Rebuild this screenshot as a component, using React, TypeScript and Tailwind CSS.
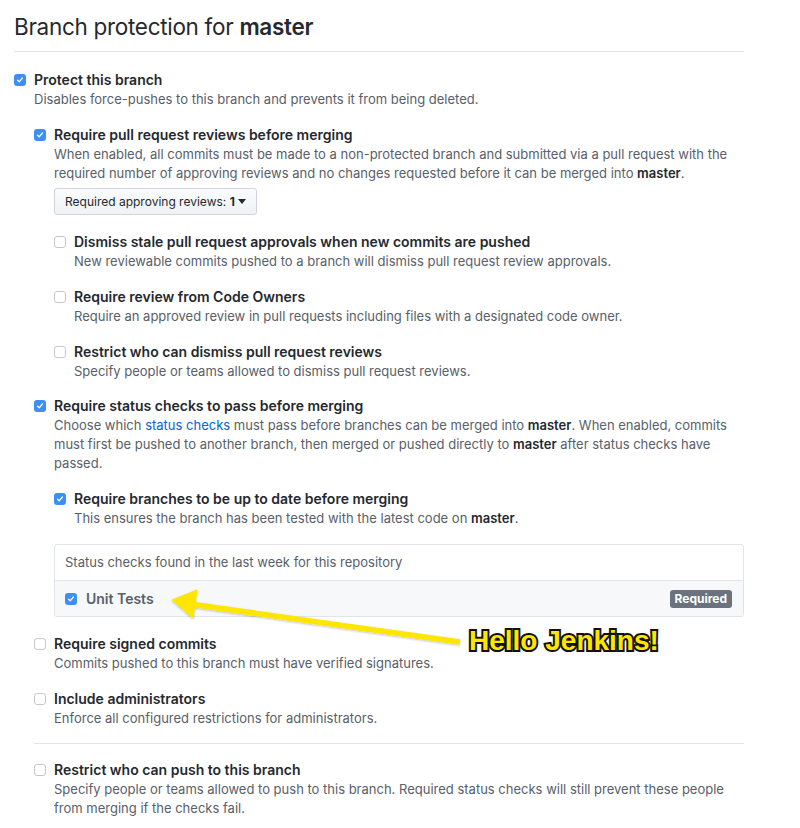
import type { ReactNode } from 'react';

const font = { fontFamily: 'Inter, "Liberation Sans", Arial, sans-serif' };

function Checkbox({ checked }: { checked?: boolean }) {
  if (checked) {
    return (
      <span className="mt-[4px] flex h-[12px] w-[12px] shrink-0 items-center justify-center rounded-[3px] bg-[#3d8ff5]">
        <svg width="8" height="8" viewBox="0 0 8 8" fill="none">
          <path d="M1.6 4.2 3.2 5.8 6.4 2" stroke="white" strokeWidth="1.3" strokeLinecap="round" strokeLinejoin="round" />
        </svg>
      </span>
    );
  }
  return <span className="mt-[4px] h-[12px] w-[12px] shrink-0 rounded-[3px] border border-[#c7c7c7] bg-white" />;
}

function Option({
  checked,
  label,
  children,
  extra,
  className = '',
}: {
  checked?: boolean;
  label: string;
  children?: ReactNode;
  extra?: ReactNode;
  className?: string;
}) {
  return (
    <div className={`flex gap-[8px] ${className}`}>
      <Checkbox checked={checked} />
      <div className="min-w-0 flex-1">
        <div className="text-[14px] font-semibold leading-[20px] text-[#24292e]">{label}</div>
        <div className="text-[13px] leading-[19px] text-[#586069]">{children}</div>
        {extra}
      </div>
    </div>
  );
}

const Master = () => <b className="font-semibold text-[#24292e]">master</b>;

export default function App() {
  return (
    <div className="relative min-h-[828px] bg-white" style={font}>
      <div className="ml-[14px] w-[730px] pt-[12px]">
        <h2 className="border-b border-[#e1e4e8] pb-[9px] text-[22.5px] leading-[30px] tracking-[-0.3px] text-[#24292e]">
          Branch protection for <span className="font-semibold">master</span>
        </h2>

        <Option
          checked
          label="Protect this branch"
          className="mt-[18px]"
          extra={
            <div>
              <Option
                checked
                label="Require pull request reviews before merging"
                className="mt-[16px]"
                extra={
                  <>
                    <button className="mt-[5px] flex h-[27px] items-center rounded-[3px] border border-[#d1d5da] bg-gradient-to-b from-[#fafbfc] to-[#eff3f6] px-[10px] text-[12px] text-[#24292e]">
                      Required approving reviews:&nbsp;<span className="font-bold">1</span>
                      <svg className="ml-[3px]" width="8" height="5" viewBox="0 0 8 5">
                        <path d="M0 0h8L4 5z" fill="#24292e" />
                      </svg>
                    </button>
                    <Option label="Dismiss stale pull request approvals when new commits are pushed" className="mt-[17px]">
                      New reviewable commits pushed to a branch will dismiss pull request review approvals.
                    </Option>
                    <Option label="Require review from Code Owners" className="mt-[16px]">
                      Require an approved review in pull requests including files with a designated code owner.
                    </Option>
                    <Option label="Restrict who can dismiss pull request reviews" className="mt-[16px]">
                      Specify people or teams allowed to dismiss pull request reviews.
                    </Option>
                  </>
                }
              >
                When enabled, all commits must be made to a non-protected branch and submitted via a pull request with the
                <br />
                required number of approving reviews and no changes requested before it can be merged into <Master />.
              </Option>

              <Option
                checked
                label="Require status checks to pass before merging"
                className="mt-[15px]"
                extra={
                  <>
                    <Option checked label="Require branches to be up to date before merging" className="mt-[16px]">
                      This ensures the branch has been tested with the latest code on <Master />.
                    </Option>
                    <div className="mt-[16px] overflow-hidden rounded-[3px] border border-[#e1e4e8]">
                      <div className="flex h-[35px] items-center px-[10px] text-[13px] text-[#586069]">
                        Status checks found in the last week for this repository
                      </div>
                      <div className="flex h-[36px] items-center border-t border-[#e1e4e8] bg-[#f6f8fa] pl-[10px] pr-[11px]">
                        <span className="-mt-[4px] flex">
                          <Checkbox checked />
                        </span>
                        <span className="ml-[9px] text-[14px] font-semibold text-[#586069]">Unit Tests</span>
                        <span className="ml-auto rounded-[3px] bg-[#6a737d] px-[5px] py-[1px] text-[12px] font-bold leading-[16px] text-white">
                          Required
                        </span>
                      </div>
                    </div>
                  </>
                }
              >
                Choose which <span className="text-[#0366d6]">status checks</span> must pass before branches can be merged into{' '}
                <Master />. When enabled, commits
                <br />
                must first be pushed to another branch, then merged or pushed directly to <Master /> after status checks have
                <br />
                passed.
              </Option>

              <Option label="Require signed commits" className="mt-[17px]">
                Commits pushed to this branch must have verified signatures.
              </Option>
              <Option label="Include administrators" className="mt-[16px]">
                Enforce all configured restrictions for administrators.
              </Option>
              <div className="mt-[15px] border-t border-[#e1e4e8]" />
              <Option label="Restrict who can push to this branch" className="mt-[16px]">
                Specify people or teams allowed to push to this branch. Required status checks will still prevent these people
                <br />
                from merging if the checks fail.
              </Option>
            </div>
          }
        >
          Disables force-pushes to this branch and prevents it from being deleted.
        </Option>
      </div>

      {/* annotation */}
      <svg className="pointer-events-none absolute left-0 top-0" width="800" height="828">
        <defs>
          <filter id="sh" x="-10%" y="-50%" width="120%" height="200%">
            <feDropShadow dx="0" dy="1" stdDeviation="1" floodColor="#000" floodOpacity="0.25" />
          </filter>
        </defs>
        <g filter="url(#sh)" fill="#ffe600" stroke="#ffe600">
          <line x1="190" y1="604" x2="460" y2="642" strokeWidth="5.5" />
          <polygon points="172,600 197,590 193,618" strokeWidth="1" strokeLinejoin="round" />
        </g>
      </svg>
      <div
        className="pointer-events-none absolute left-[469px] top-[623px] text-[28px] font-bold leading-[36px] text-[#ffe600] [-webkit-text-stroke:4px_#111] [paint-order:stroke_fill]"
        style={{ fontFamily: '"Liberation Sans", Arial, sans-serif' }}
      >
        Hello Jenkins!
      </div>
    </div>
  );
}
